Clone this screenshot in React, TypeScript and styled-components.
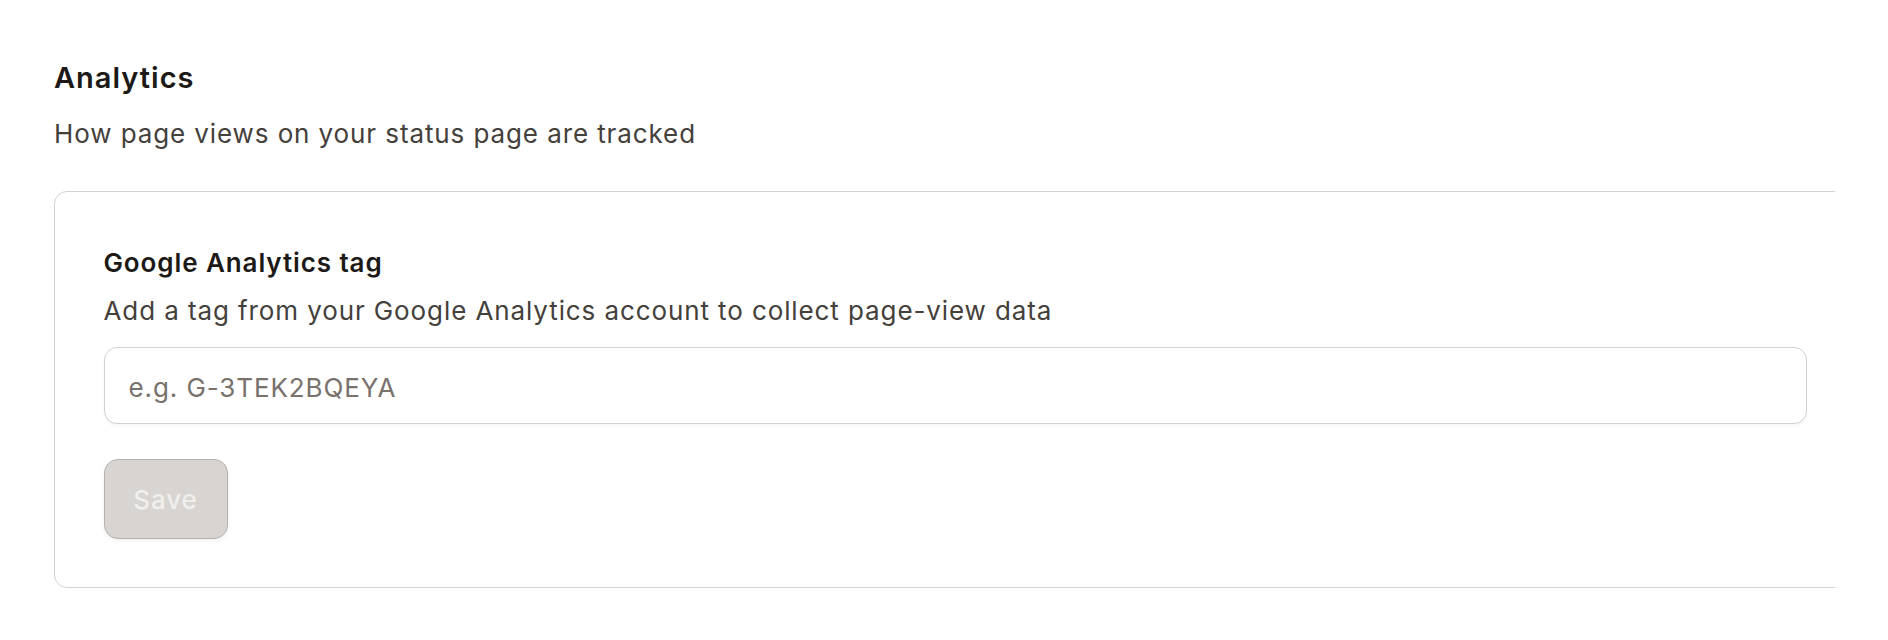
import React from 'react';
import styled, { createGlobalStyle } from 'styled-components';

const GlobalStyle = createGlobalStyle`
  html, body {
    margin: 0;
    padding: 0;
    background: #ffffff;
  }
  body {
    font-family: Inter, "Noto Sans", sans-serif;
    -webkit-font-smoothing: antialiased;
  }
`;

const Page = styled.main`
  padding: 58px 0 0 54px;
`;

const Header = styled.header`
  display: flex;
  flex-direction: column;
  gap: 16px;
  margin-bottom: 37px;
`;

const Title = styled.h2`
  margin: 0;
  font-size: 29px;
  line-height: 40px;
  font-weight: 600;
  color: #1c1917;
  letter-spacing: 1px;
`;

const Subtitle = styled.p`
  margin: 0;
  font-size: 26px;
  line-height: 40px;
  color: #44403c;
  letter-spacing: 0.9px;
`;

const Clip = styled.div`
  width: 1781px;
  overflow: hidden;
`;

const Card = styled.section`
  box-sizing: border-box;
  width: 1802px;
  border: 1.5px solid #d4d1cf;
  border-radius: 13px;
  padding: 51px 48.5px 48px;
  display: flex;
  flex-direction: column;
  align-items: flex-start;
`;

const Label = styled.label`
  font-size: 26px;
  line-height: 40px;
  font-weight: 600;
  color: #1c1917;
  letter-spacing: 0.9px;
`;

const Help = styled.p`
  margin: 8px 0 16px;
  font-size: 26px;
  line-height: 40px;
  color: #44403c;
  letter-spacing: 0.9px;
`;

const Input = styled.input`
  box-sizing: border-box;
  width: 100%;
  height: 77px;
  border: 1.5px solid #d4d1cf;
  border-radius: 13px;
  padding: 4px 24px 0;
  font-family: inherit;
  font-size: 26px;
  letter-spacing: 0.9px;
  color: #1c1917;
  background: #fff;
  box-shadow: 0 2px 3px rgba(0, 0, 0, 0.04);
  outline: none;

  &::placeholder {
    color: #78716c;
  }
`;

const Button = styled.button<{ $disabled?: boolean }>`
  box-sizing: border-box;
  margin-top: 35px;
  width: 124px;
  height: 80px;
  border-radius: 14px;
  border: 1.5px solid ${(p) => (p.$disabled ? '#b7b1ad' : '#1c1917')};
  background: ${(p) => (p.$disabled ? '#d8d4d1' : '#1c1917')};
  color: ${(p) => (p.$disabled ? '#f1efed' : '#fff')};
  font-family: inherit;
  font-size: 26px;
  font-weight: 500;
  letter-spacing: 0.9px;
  box-shadow: 0 2px 4px rgba(0, 0, 0, 0.06);
  cursor: ${(p) => (p.$disabled ? 'default' : 'pointer')};
`;

export default function App() {
  return (
    <>
      <GlobalStyle />
      <Page>
        <Header>
          <Title>Analytics</Title>
          <Subtitle>How page views on your status page are tracked</Subtitle>
        </Header>
        <Clip>
          <Card>
            <Label htmlFor="ga-tag">Google Analytics tag</Label>
            <Help>Add a tag from your Google Analytics account to collect page-view data</Help>
            <Input id="ga-tag" placeholder="e.g. G-3TEK2BQEYA" />
            <Button $disabled>Save</Button>
          </Card>
        </Clip>
      </Page>
    </>
  );
}
